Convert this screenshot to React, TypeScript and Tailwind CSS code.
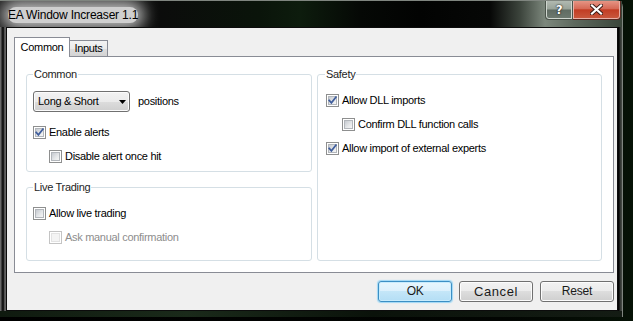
import clsx from 'clsx'

const ui = "font-['Liberation_Sans',Arial,sans-serif] text-[11px] leading-[13px] tracking-[-0.3px] text-black"

function CheckBox({ checked = false, disabled = false }: { checked?: boolean; disabled?: boolean }) {
  return (
    <span
      className={clsx(
        'relative flex h-[13px] w-[13px] shrink-0 border bg-white p-[1px]',
        disabled ? 'border-[#c4c4c4]' : 'border-[#8e8f8f]'
      )}
    >
      <span
        className={clsx(
          'h-full w-full border',
          disabled
            ? 'border-[#e3e3e3] bg-[#f4f4f4]'
            : 'border-[#b2b6bb] bg-[linear-gradient(135deg,#c6cad0_0%,#e6e8ea_60%,#f6f6f6_100%)]'
        )}
      />
      {checked && (
        <svg className="absolute inset-0" width="11" height="11" viewBox="0 0 11 11">
          <path d="M2.2 5.4 L4.4 7.9 L8.9 2.2" fill="none" stroke="#3f5d9c" strokeWidth="1.7" strokeLinecap="square" />
        </svg>
      )}
    </span>
  )
}

function Option({
  label,
  checked,
  disabled,
  indent,
}: {
  label: string
  checked?: boolean
  disabled?: boolean
  indent?: boolean
}) {
  return (
    <div className={clsx('flex h-[16px] items-center gap-[3px]', indent && 'pl-[16px]')}>
      <CheckBox checked={checked} disabled={disabled} />
      <span className={clsx('whitespace-nowrap', disabled && 'text-[#8d8d8d]')}>{label}</span>
    </div>
  )
}

function Group({
  title,
  className,
  legendClass = 'ml-[6px]',
  children,
}: {
  title: string
  className?: string
  legendClass?: string
  children: React.ReactNode
}) {
  return (
    <fieldset className={clsx('min-w-0 rounded-[3px] border border-[#d5dfe5]', className)}>
      <legend className={clsx('px-[1px] text-[#1e1e1e]', legendClass)}>{title}</legend>
      {children}
    </fieldset>
  )
}

function Button({ children, primary, className }: { children: React.ReactNode; primary?: boolean; className?: string }) {
  return (
    <button
      className={clsx(
        'flex h-[21px] w-[74px] items-center justify-center rounded-[3px] border text-[#1a1a1a]',
        primary
          ? 'border-[#3c8fc4] bg-[linear-gradient(#e8f6fd_0%,#dbf0fc_50%,#c4e6f8_50%,#b4def5_100%)] shadow-[inset_0_0_0_1px_#c8ecfd,0_0_1px_1px_#9fd8f5]'
          : 'border-[#707070] bg-[linear-gradient(#f2f2f2_0%,#ebebeb_50%,#dddddd_50%,#cfcfcf_100%)] shadow-[inset_0_0_0_1px_#fcfcfc]',
        className
      )}
    >
      {children}
    </button>
  )
}

export default function App() {
  return (
    <div className={clsx('h-[321px] w-[633px] overflow-hidden bg-[linear-gradient(90deg,#000_0%,#020502_80%,#061206_100%)]', ui)}>
      <div className="flex h-[317px] w-[623px] flex-col rounded-tr-[7px] border-t border-r border-[#7f857f] bg-[linear-gradient(180deg,#262a26_0%,#1a1e1a_50%,#142014_100%)]">
        {/* title bar */}
        <div className="flex h-[26px] shrink-0 overflow-hidden bg-[linear-gradient(90deg,#1c1c1c_0px,#0b0c0b_160px,#0a140a_260px,#0d1c0d_300px,#050805_360px,#020302_420px,#060706_490px,#3c443c_520px,#7c877c_545px,#5d685d_575px,#3a463a_622px)]">
          <div className="flex items-center pl-[8px] pt-[2px]">
            <span className="rounded-[10px] bg-[#cfcfcf] text-[12px] leading-[16px] tracking-[-0.2px] shadow-[0_0_16px_6px_#c4c4c4]">
              EA Window Increaser 1.1
            </span>
          </div>
          <div className="flex-1" />
          <div className="-mt-px flex h-[20px] self-start">
            <div className="flex w-[28px] items-center justify-center rounded-bl-[4px] border border-t-0 border-[#4b544b] bg-[linear-gradient(#b4bcb4_0%,#98a298_48%,#5f6b62_52%,#6e7a70_100%)] shadow-[inset_0_0_0_1px_#cfd6cf]">
              <span className="font-['DejaVu_Sans',sans-serif] text-[12px] font-bold leading-none text-white [text-shadow:0_0_2px_#222,0_0_1px_#000]">?</span>
            </div>
            <div className="flex w-[48px] items-center justify-center rounded-br-[4px] border border-t-0 border-l-0 border-[#5a2a22] bg-[linear-gradient(#e89a8a_0%,#d66a57_45%,#c23d24_52%,#c95a3f_100%)] shadow-[inset_0_0_0_1px_#e8b0a6]">
              <svg width="13" height="11" viewBox="0 0 13 11">
                <path d="M2 1.5 L11 9.5 M11 1.5 L2 9.5" stroke="#3a1a14" strokeWidth="4" strokeLinecap="square" />
                <path d="M2 1.5 L11 9.5 M11 1.5 L2 9.5" stroke="#ffffff" strokeWidth="2.2" strokeLinecap="square" />
              </svg>
            </div>
            <div className="w-px" />
          </div>
        </div>

        <div className="flex flex-1">
          <div className="w-[6px] shrink-0 bg-[linear-gradient(90deg,#6a6a6a_0px,#6a6a6a_1px,#141414_2px,#1c1c1c_4px,#8a8a8a_5px,#3a3a3a_6px)]" />
          {/* client area */}
          <div className="flex h-[284px] w-[612px] flex-col border border-[#0c0c0c] bg-[#f0f0f0] pl-[7px] pr-[3px] pt-[9px]">
            <div className="relative z-10 -mb-px flex items-end">
              <div className="flex h-[20px] w-[56px] items-center justify-center border border-b-0 border-[#898c95] bg-white">
                Common
              </div>
              <div className="flex h-[17px] w-[38px] items-center justify-center border border-l-0 border-[#898c95] bg-[linear-gradient(#f3f3f3_0%,#ebebeb_50%,#dedede_50%,#d3d3d3_100%)]">
                Inputs
              </div>
            </div>
            <div className="h-[217px] border border-[#898c95] bg-white p-[11px]">
              <div className="grid h-full grid-cols-[286px_285px] gap-[5px]">
                <div className="flex flex-col gap-[9px]">
                  <Group title="Common" className="h-[104px]">
                    <div className="flex flex-col px-[6px] pt-[10px]">
                      <div className="flex h-[21px] items-center gap-[8px]">
                        <div className="flex h-[21px] w-[97px] items-center justify-between rounded-[3px] border border-[#707070] bg-[linear-gradient(#f2f2f2_0%,#ebebeb_50%,#dddddd_50%,#cfcfcf_100%)] pl-[4px] pr-[3px] shadow-[inset_0_0_0_1px_#fbfbfb]">
                          <span>Long &amp; Short</span>
                          <svg width="7" height="4" viewBox="0 0 7 4">
                            <path d="M0 0 H7 L3.5 4 Z" fill="#000" />
                          </svg>
                        </div>
                        <span>positions</span>
                      </div>
                      <div className="mt-[12px] flex flex-col gap-[8px]">
                        <Option label="Enable alerts" checked />
                        <Option label="Disable alert once hit" indent />
                      </div>
                    </div>
                  </Group>
                  <Group title="Live Trading" className="flex-1">
                    <div className="flex flex-col gap-[8px] px-[6px] pt-[11px]">
                      <Option label="Allow live trading" />
                      <Option label="Ask manual confirmation" indent disabled />
                    </div>
                  </Group>
                </div>
                <Group title="Safety" className="h-full" legendClass="ml-[7px]">
                  <div className="flex flex-col gap-[8px] px-[8px] pt-[11px]">
                    <Option label="Allow DLL imports" checked />
                    <Option label="Confirm DLL function calls" indent />
                    <Option label="Allow import of external experts" checked />
                  </div>
                </Group>
              </div>
            </div>
            <div className="mt-[8px] flex justify-end gap-[7px]">
              <Button primary className="text-[12px]">OK</Button>
              <Button className="text-[13px] tracking-[0.6px]">Cancel</Button>
              <Button className="text-[12px] tracking-[-0.2px]">Reset</Button>
            </div>
          </div>
          <div className="w-[4px] shrink-0 bg-[linear-gradient(90deg,#050505_0px,#050505_1px,#2c302c_2px,#4a504a_4px)]" />
        </div>
        <div className="h-[6px] shrink-0 bg-[linear-gradient(90deg,#0f1a0f,#1a2a1a_30%,#0a120a_60%,#141c14)]" />
      </div>
    </div>
  )
}
